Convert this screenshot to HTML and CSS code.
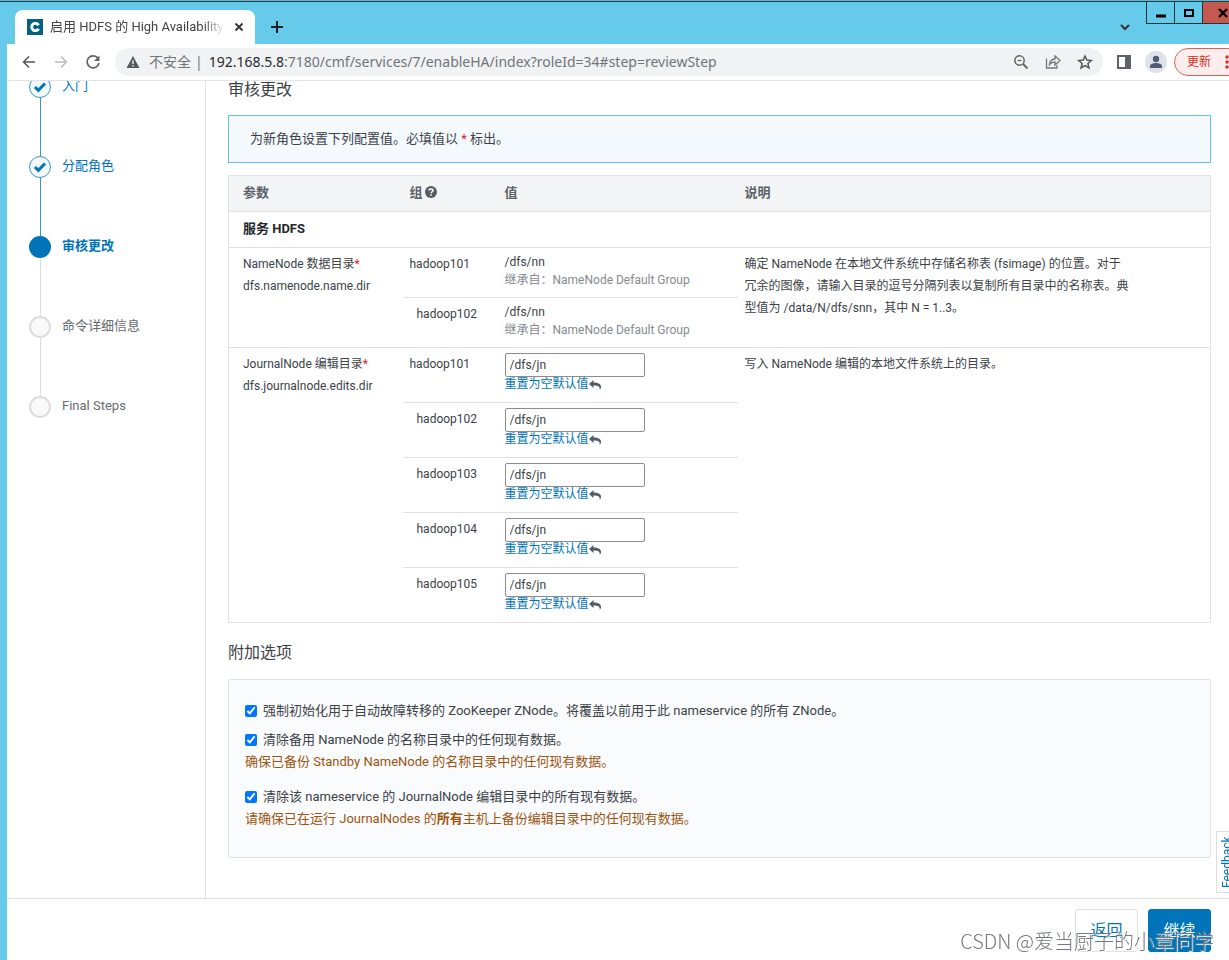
FILE: index.html
```html
<!DOCTYPE html>
<html lang="zh-CN">
<head>
<meta charset="utf-8">
<title>启用 HDFS 的 High Availability</title>
<link rel="stylesheet" href="styles.css">
</head>
<body>
<div class="window">
  <header class="tabstrip">
    <div class="tab">
      <svg class="favicon" viewBox="0 0 16 16"><rect width="16" height="16" fill="#04617f"/><path d="M11.600 6.200A3.700 3.700 0 1 0 11.600 9.800" fill="none" stroke="#fff" stroke-width="2.800"/></svg>
      <span class="tab-title">启用 HDFS 的 High Availability</span>
      <button class="icon-btn" aria-label="关闭标签页"><svg width="10" height="10" viewBox="0 0 10 10"><path d="M1.500 1.500l7 7M8.500 1.500l-7 7" stroke="#333" stroke-width="1.800"/></svg></button>
    </div>
    <button class="icon-btn new-tab" aria-label="新标签页"><svg width="14" height="14" viewBox="0 0 14 14"><path d="M7 1v12M1 7h12" stroke="#222" stroke-width="2"/></svg></button>
    <button class="icon-btn tab-search" aria-label="搜索标签页"><svg width="12" height="8" viewBox="0 0 12 8"><path d="M2 2l4 4 4-4" fill="none" stroke="#333" stroke-width="2"/></svg></button>
    <div class="win-controls">
      <button aria-label="最小化"><svg width="12" height="10" viewBox="0 0 12 10"><path d="M1 8h10" stroke="#000" stroke-width="3"/></svg></button>
      <button aria-label="最大化"><svg width="12" height="10" viewBox="0 0 12 10"><rect x="2" y="2" width="8" height="6" fill="none" stroke="#000" stroke-width="2"/></svg></button>
      <button class="win-close" aria-label="关闭"><svg width="12" height="10" viewBox="0 0 12 10"><path d="M2 1l8 8M10 1L2 9" stroke="#000" stroke-width="2.400"/></svg></button>
    </div>
  </header>

  <nav class="toolbar">
    <button class="icon-btn nav-btn" aria-label="后退"><svg width="16" height="16" viewBox="0 0 16 16"><path d="M14 8H3M8 2.500L2.500 8 8 13.500" fill="none" stroke="#555" stroke-width="1.500"/></svg></button>
    <button class="icon-btn nav-btn" aria-label="前进"><svg width="16" height="16" viewBox="0 0 16 16"><path d="M2 8h11M8 2.500L13.500 8 8 13.500" fill="none" stroke="#bbb" stroke-width="1.500"/></svg></button>
    <button class="icon-btn nav-btn" aria-label="重新加载"><svg width="16" height="16" viewBox="0 0 16 16"><path d="M13 4.300A6 6 0 1 0 14 9" fill="none" stroke="#5f6368" stroke-width="1.700"/><path d="M14.500 1.500v5.500H9z" fill="#5f6368"/></svg></button>
    <div class="omnibox">
      <svg width="14" height="14" viewBox="0 0 14 14"><path d="M7 1l6.500 12H.5z" fill="#555a5e"/><path d="M7 5.200v3.800M7 10v1.500" stroke="#f1f3f4" stroke-width="1.300"/></svg>
      <span class="insecure">不安全</span>
      <span class="url-sep">|</span>
      <span class="url"><b>192.168.5.8</b>:7180/cmf/services/7/enableHA/index?roleId=34#step=reviewStep</span>
      <button class="icon-btn" aria-label="缩放"><svg width="16" height="16" viewBox="0 0 16 16"><circle cx="6.500" cy="6.500" r="4.700" fill="none" stroke="#666" stroke-width="1.500"/><path d="M10 10l4.500 4.500" stroke="#666" stroke-width="2"/><path d="M4.500 6.500h4" stroke="#666" stroke-width="1.300"/></svg></button>
      <button class="icon-btn" aria-label="分享"><svg width="16" height="16" viewBox="0 0 16 16" fill="none" stroke="#777" stroke-width="1.300"><path d="M1.500 4.500v9.500h10.500v-3"/><path d="M4.500 10.500C4.800 6.800 7 5.200 10 5V2l5 4.500L10 11V8C7.500 8 5.800 8.800 4.500 10.500z"/></svg></button>
      <button class="icon-btn" aria-label="收藏"><svg width="16" height="16" viewBox="0 0 16 16"><path d="M8 2l1.800 4.100 4.400.4-3.300 3 1 4.400L8 11.600l-3.900 2.300 1-4.400-3.300-3 4.400-.4z" fill="none" stroke="#555" stroke-width="1.500"/></svg></button>
    </div>
    <button class="icon-btn side-panel" aria-label="侧边栏"><svg width="14" height="14" viewBox="0 0 14 14"><rect x="1" y="1" width="12" height="12" fill="#fff" stroke="#5f6368" stroke-width="2"/><rect x="8" y="1" width="5" height="12" fill="#5f6368"/></svg></button>
    <button class="icon-btn avatar" aria-label="个人资料"><svg width="14" height="14" viewBox="0 0 14 14" fill="#4d5b75"><circle cx="7" cy="4" r="3.200"/><path d="M1 13v-2c0-2 3.500-3 6-3s6 1 6 3v2z"/></svg></button>
    <button class="update">更新<svg width="4" height="14" viewBox="0 0 4 14" fill="#d93025"><circle cx="2" cy="2" r="1.700"/><circle cx="2" cy="7" r="1.700"/><circle cx="2" cy="12" r="1.700"/></svg></button>
  </nav>

  <div class="page">
    <aside class="sidebar">
      <ol class="steps">
        <li class="step done"><span class="dot"><svg width="14" height="12" viewBox="0 0 14 12"><path d="M2 6l3.300 3.300L12 2.500" fill="none" stroke="#0074b8" stroke-width="3"/></svg></span><a href="#">入门</a></li>
        <li class="step done"><span class="dot"><svg width="14" height="12" viewBox="0 0 14 12"><path d="M2 6l3.300 3.300L12 2.500" fill="none" stroke="#0074b8" stroke-width="3"/></svg></span><a href="#">分配角色</a></li>
        <li class="step current"><span class="dot"></span><span>审核更改</span></li>
        <li class="step"><span class="dot"></span><span>命令详细信息</span></li>
        <li class="step"><span class="dot"></span><span>Final Steps</span></li>
      </ol>
    </aside>

    <main class="content">
      <h1>审核更改</h1>
      <div class="notice">为新角色设置下列配置值。必填值以 <span class="required">*</span> 标出。</div>

      <table class="config">
        <colgroup><col class="col-param"><col class="col-group"><col class="col-value"><col></colgroup>
        <thead>
          <tr>
            <th>参数</th>
            <th>组<svg class="help" width="12" height="12" viewBox="0 0 12 12"><circle cx="6" cy="6" r="6" fill="#555b62"/><path d="M4 4.600C4 2.500 8 2.500 8 4.600 8 6 6 5.900 6 7.300M6 8.300v1.500" fill="none" stroke="#fff" stroke-width="1.500"/></svg></th>
            <th>值</th>
            <th>说明</th>
          </tr>
        </thead>
        <tbody>
          <tr class="service"><th colspan="4">服务 HDFS</th></tr>
          <tr class="inherited">
            <td rowspan="2">NameNode 数据目录<span class="required">*</span><br>dfs.namenode.name.dir</td>
            <td>hadoop101</td>
            <td class="value">/dfs/nn<small>继承自：NameNode Default Group</small></td>
            <td rowspan="2"><p class="desc">确定 NameNode 在本地文件系统中存储名称表 (fsimage) 的位置。对于冗余的图像，请输入目录的逗号分隔列表以复制所有目录中的名称表。典型值为 /data/N/dfs/snn，其中 N = 1..3。</p></td>
          </tr>
          <tr class="inherited">
            <td class="nested">hadoop102</td>
            <td class="value">/dfs/nn<small>继承自：NameNode Default Group</small></td>
          </tr>
          <tr class="editable">
            <td rowspan="5">JournalNode 编辑目录<span class="required">*</span><br>dfs.journalnode.edits.dir</td>
            <td><label for="jn1">hadoop101</label></td>
            <td class="value"><input id="jn1" type="text" value="/dfs/jn"><a class="reset" href="#">重置为空默认值<svg width="12" height="10" viewBox="0 0 12 10"><path d="M0 4L4.500 0v2.400C9.500 2.400 12 4 12 6.700c0 1.200-.5 2.300-1.300 3.100.5-2.700-1.200-4.200-6.200-4.200V8z" fill="#555b62"/></svg></a></td>
            <td rowspan="5"><p class="desc">写入 NameNode 编辑的本地文件系统上的目录。</p></td>
          </tr>
          <tr class="editable">
            <td class="nested"><label for="jn2">hadoop102</label></td>
            <td class="value"><input id="jn2" type="text" value="/dfs/jn"><a class="reset" href="#">重置为空默认值<svg width="12" height="10" viewBox="0 0 12 10"><path d="M0 4L4.500 0v2.400C9.500 2.400 12 4 12 6.700c0 1.200-.5 2.300-1.300 3.100.5-2.700-1.200-4.200-6.200-4.200V8z" fill="#555b62"/></svg></a></td>
          </tr>
          <tr class="editable">
            <td class="nested"><label for="jn3">hadoop103</label></td>
            <td class="value"><input id="jn3" type="text" value="/dfs/jn"><a class="reset" href="#">重置为空默认值<svg width="12" height="10" viewBox="0 0 12 10"><path d="M0 4L4.500 0v2.400C9.500 2.400 12 4 12 6.700c0 1.200-.5 2.300-1.300 3.100.5-2.700-1.200-4.200-6.200-4.200V8z" fill="#555b62"/></svg></a></td>
          </tr>
          <tr class="editable">
            <td class="nested"><label for="jn4">hadoop104</label></td>
            <td class="value"><input id="jn4" type="text" value="/dfs/jn"><a class="reset" href="#">重置为空默认值<svg width="12" height="10" viewBox="0 0 12 10"><path d="M0 4L4.500 0v2.400C9.500 2.400 12 4 12 6.700c0 1.200-.5 2.300-1.300 3.100.5-2.700-1.200-4.200-6.200-4.200V8z" fill="#555b62"/></svg></a></td>
          </tr>
          <tr class="editable">
            <td class="nested"><label for="jn5">hadoop105</label></td>
            <td class="value"><input id="jn5" type="text" value="/dfs/jn"><a class="reset" href="#">重置为空默认值<svg width="12" height="10" viewBox="0 0 12 10"><path d="M0 4L4.500 0v2.400C9.500 2.400 12 4 12 6.700c0 1.200-.5 2.300-1.300 3.100.5-2.700-1.200-4.200-6.200-4.200V8z" fill="#555b62"/></svg></a></td>
          </tr>
        </tbody>
      </table>

      <h2>附加选项</h2>
      <section class="options">
        <div class="option">
          <label><input type="checkbox" checked>强制初始化用于自动故障转移的 ZooKeeper ZNode。将覆盖以前用于此 nameservice 的所有 ZNode。</label>
        </div>
        <div class="option">
          <label><input type="checkbox" checked>清除备用 NameNode 的名称目录中的任何现有数据。</label>
          <p class="warning">确保已备份 Standby NameNode 的名称目录中的任何现有数据。</p>
        </div>
        <div class="option">
          <label><input type="checkbox" checked>清除该 nameservice 的 JournalNode 编辑目录中的所有现有数据。</label>
          <p class="warning">请确保已在运行 JournalNodes 的<strong>所有</strong>主机上备份编辑目录中的任何现有数据。</p>
        </div>
      </section>
    </main>
  </div>

  <footer class="actions">
    <button class="btn">返回</button>
    <button class="btn primary">继续</button>
  </footer>
</div>
<button class="feedback">Feedback</button>
<div class="watermark">CSDN @爱当厨子的小章同学</div>
</body>
</html>
```

FILE: styles.css
```css
* { box-sizing: border-box; }

body {
  margin: 0;
  overflow: hidden;
  background: #66caea;
  color: #3c4248;
  font: 13px/22px Roboto, "Noto Sans CJK SC", sans-serif;
}

button, input { font: inherit; color: inherit; }
button { cursor: pointer; }
a { color: #0074b8; text-decoration: none; }
svg { flex: none; }
h1, h2, p, ol { margin: 0; padding: 0; }

.window {
  display: flex;
  flex-direction: column;
  height: 100vh;
  padding-left: 7px;
}

.icon-btn {
  display: flex;
  flex: none;
  align-items: center;
  justify-content: center;
  padding: 0;
  border: 0;
  background: none;
}

/* Browser tabs */
.tabstrip {
  display: flex;
  flex: none;
  height: 44px;
  margin-left: -7px;
  padding-left: 15px;
  border-top: 1px solid #5fb4cf;
  box-shadow: inset 0 1px #23424f;
}

.tab {
  display: flex;
  align-items: center;
  width: 240px;
  height: 34px;
  margin-top: 9px;
  padding: 0 11px 0 12px;
  border-radius: 8px 8px 0 0;
  background: #fff;
}

.favicon { width: 16px; height: 16px; margin-right: 7px; }

.tab-title {
  flex: 1;
  overflow: hidden;
  margin-right: 10px;
  color: #444;
  font: 13px/20px Roboto, "Noto Sans CJK SC", sans-serif;
  white-space: nowrap;
  mask-image: linear-gradient(90deg, #000 88%, transparent);
}

.new-tab { align-self: center; margin: 8px 0 0 15px; }
.tab-search { align-self: center; margin: 8px 15px 0 auto; }

.win-controls { display: flex; height: 22px; margin: 1px -13px 0 0; }

.win-controls button {
  display: flex;
  align-items: center;
  justify-content: center;
  width: 28px;
  padding: 0;
  border: 1px solid #22343c;
  border-width: 0 0 1px 1px;
  background: none;
}

.win-controls .win-close { width: 40px; background: #c4594f; }

/* Address bar */
.toolbar {
  display: flex;
  flex: none;
  align-items: center;
  height: 37px;
  margin-right: -16px;
  padding-left: 14px;
  border-bottom: 1px solid #e3e3e3;
  background: #fff;
}

.nav-btn { width: 16px; margin-right: 16px; }

.omnibox {
  display: flex;
  flex: 1;
  align-items: center;
  gap: 16px;
  height: 28px;
  margin-left: -2px;
  padding: 0 10px 0 11px;
  border-radius: 14px;
  background: #f1f2f4;
  color: #70757a;
  font: 14px/20px "Noto Sans", "Noto Sans CJK SC", sans-serif;
}

.insecure { margin-left: -7px; }
.url-sep { margin: 0 -10px 0 -12px; }
.url { flex: 1; white-space: nowrap; }
.url b { color: #26292c; font-weight: 400; }

.side-panel { margin: 0 14px; }
.avatar { width: 22px; height: 22px; border-radius: 50%; background: #dfe2e8; }

.update {
  display: flex;
  align-items: center;
  gap: 14px;
  height: 28px;
  margin-left: 7px;
  padding: 0 15px 0 12px;
  border: 1px solid #d9605a;
  border-radius: 14px;
  background: #fdeeed;
  color: #d93025;
  font-size: 12px;
}

/* Wizard */
.page {
  display: flex;
  flex: 1;
  min-height: 0;
  overflow: hidden;
  background: #fff;
}

.sidebar {
  flex: none;
  width: 199px;
  padding-left: 22px;
  border-right: 1px solid #e3e3e3;
}

.steps { margin-top: -5px; list-style: none; }

.step {
  display: grid;
  grid-template-columns: 22px 1fr;
  grid-template-rows: 22px 58px;
  column-gap: 11px;
  color: #666b70;
  line-height: 20px;
}

.step:not(:last-child)::after {
  content: "";
  grid-row: 2;
  justify-self: center;
  width: 1px;
  background: #ddd;
}

.step.done::after { background: #3b97cb; }

.dot {
  display: flex;
  align-items: center;
  justify-content: center;
  border: 2px solid #ddd;
  border-radius: 50%;
  background: #fafafa;
}

.done .dot { border: 1px solid #3b97cb; background: #f3f8fd; }
.current .dot { border-color: #0074b8; background: #0074b8; }
.current { color: #0074b8; font-weight: 700; }

.content { flex: 1; min-width: 0; padding: 0 18px 0 22px; }

h1, h2 { font-size: 16px; font-weight: 400; line-height: 20px; }
h1 { line-height: 18px; }

.notice {
  margin: 16px 0 12px;
  padding: 12px 21px;
  border: 1px solid #5dc4ea;
  background: #f4f9fe;
}

.required { color: #e02020; }

.config {
  width: 100%;
  border: 1px solid #e0e2e4;
  border-collapse: collapse;
  table-layout: fixed;
  font-size: 12px;
}

.col-param { width: 174px; }
.col-group { width: 95px; }
.col-value { width: 240px; }

.config th, .config td {
  padding: 5px 7px;
  border-top: 1px solid #e0e2e4;
  text-align: left;
  vertical-align: top;
}

.config th:first-child, .config td[rowspan]:first-child { padding-left: 14px; }
.config th { height: 36px; padding-top: 6px; font-size: 13px; font-weight: 700; }
.config thead th { background: #f3f4f6; color: #5c6269; }
.service th { color: #23282d; }
.config .nested { padding-left: 14px; }
.help { margin-left: 2px; vertical-align: -1px; }
.inherited td { height: 50px; }
.editable td { height: 55px; }
.config .value { line-height: 18px; }
.value small { display: block; color: #858b91; font-size: 12px; }

.value input {
  display: block;
  width: 140px;
  height: 24px;
  padding: 0 4px;
  border: 1px solid #8c8c8c;
  border-radius: 2px;
  background: #fff;
}

.reset { display: flex; align-items: center; line-height: 15px; }
.desc { max-width: 384px; }

h2 { margin: 20px 0 16px; }

.options {
  padding: 20px 16px 14px;
  border: 1px solid #e0e2e4;
  border-radius: 2px;
  background: #fafbfd;
}

.option { margin-bottom: 7px; }
.option + .option { padding-bottom: 6px; }
.option label { display: flex; align-items: center; gap: 6px; }
.option input { width: 12px; height: 12px; margin: 0; }
.warning { color: #9b5510; }

.actions {
  display: flex;
  flex: none;
  justify-content: flex-end;
  gap: 10px;
  height: 62px;
  padding: 10px 18px 8px;
  border-top: 1px solid #dcdee0;
  background: #fff;
}

.btn {
  width: 63px;
  border: 1px solid #dfe1e3;
  border-radius: 3px;
  background: #fff;
  color: #0074b8;
  font-size: 16px;
}

.btn.primary { border-color: #0074b8; background: #0074b8; color: #fff; }

.feedback {
  position: fixed;
  right: -9px;
  bottom: 67px;
  height: 62px;
  padding: 0 4px;
  border: 1px solid #dcdee0;
  background: #fff;
  color: #0074b8;
  font-size: 12px;
  line-height: 12px;
  writing-mode: vertical-rl;
  transform: rotate(180deg);
}

.watermark {
  position: fixed;
  right: 15px;
  bottom: 6px;
  color: #75797d;
  font: 300 20px/26px "Noto Sans CJK SC", sans-serif;
  text-shadow: 1px 1px 1px #fff;
  pointer-events: none;
}
```
